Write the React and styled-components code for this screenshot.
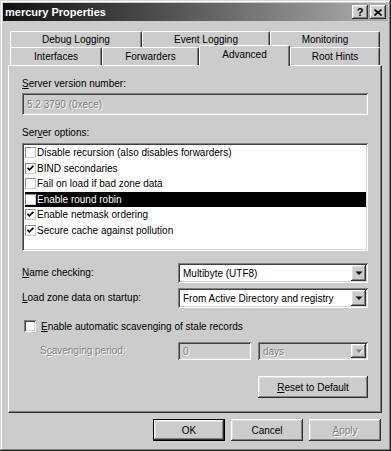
import React from 'react';
import styled, { createGlobalStyle, css } from 'styled-components';

const GlobalStyle = createGlobalStyle`
  html, body {
    margin: 0;
    padding: 0;
    background: #cccccc;
  }
  body {
    font-family: "Liberation Sans", Arial, sans-serif;
    font-size: 10px;
    color: #000;
  }
`;

const raised = css`
  background: #cccccc;
  box-shadow: inset -1px -1px #303030, inset 1px 1px #ffffff,
    inset -2px -2px #808080, inset 2px 2px #dedede;
`;

const sunken = css`
  box-shadow: inset 1px 1px #808080, inset -1px -1px #ffffff,
    inset 2px 2px #404040, inset -2px -2px #d6d6d6;
`;

const disabledText = css`
  color: #808080;
  text-shadow: 1px 1px #ffffff;
`;

const Window = styled.div`
  width: 391px;
  height: 451px;
  box-sizing: border-box;
  padding: 3px;
  display: flex;
  flex-direction: column;
  background: #cccccc;
  box-shadow: inset -1px -1px #202020, inset 1px 1px #d8d8d8,
    inset -2px -2px #808080, inset 2px 2px #ffffff;
`;

const TitleBar = styled.div`
  height: 18px;
  display: flex;
  align-items: center;
  padding: 0 2px 0 2px;
  background: linear-gradient(90deg, #111111 0%, #555555 45%, #b0b0b0 100%);
`;

const Title = styled.div`
  flex: 1;
  color: #fff;
  font-weight: bold;
  font-size: 11px;
`;

const Caps = styled.div`
  display: flex;
  gap: 2px;
`;

const CapButton = styled.div`
  ${raised};
  width: 16px;
  height: 14px;
  display: flex;
  align-items: center;
  justify-content: center;
  font-weight: bold;
  font-size: 11px;
  line-height: 1;
`;

const Body = styled.div`
  flex: 1;
  display: flex;
  flex-direction: column;
  padding: 10px 6px 0 5px;
`;

const TabStrip = styled.div`
  display: flex;
  flex-direction: column;
  padding-left: 2px;
`;

const TabRow = styled.div`
  display: flex;
  align-items: flex-end;
  height: ${(p) => p.$h}px;
`;

const Tab = styled.div`
  width: ${(p) => p.$w}px;
  height: 100%;
  box-sizing: border-box;
  display: flex;
  align-items: center;
  justify-content: center;
  background: #cccccc;
  border-top: 1px solid #ffffff;
  border-left: 1px solid #ffffff;
  border-right: 1px solid #303030;
  border-radius: 2px 2px 0 0;
  box-shadow: inset -1px 0 #808080;
  ${(p) =>
    p.$active &&
    css`
      height: 21px;
      margin-top: -2px;
      margin-bottom: -1px;
      padding-bottom: 3px;
      position: relative;
      z-index: 1;
    `}
`;

const Panel = styled.div`
  height: 348px;
  box-sizing: border-box;
  display: flex;
  flex-direction: column;
  padding: 11px 13px 14px 13px;
  border: 1px solid;
  border-color: #ffffff #303030 #303030 #ffffff;
  box-shadow: inset -1px -1px #808080;
`;

const Label = styled.div`
  height: 14px;
  line-height: 14px;
  margin-top: ${(p) => p.$mt || 0}px;
  padding-left: ${(p) => p.$indent || 0}px;
  ${(p) => p.$disabled && disabledText};
`;

const TextBox = styled.div`
  ${sunken};
  margin-top: ${(p) => p.$mt || 0}px;
  height: ${(p) => p.$h}px;
  box-sizing: border-box;
  display: flex;
  align-items: center;
  padding-left: 5px;
  background: #cccccc;
  ${disabledText};
`;

const ListBox = styled.div`
  ${sunken};
  margin-top: 3px;
  height: 108px;
  box-sizing: border-box;
  padding: 2px 2px 2px 3px;
  background: #ffffff;
  overflow: hidden;
`;

const ListItem = styled.div`
  height: 15.5px;
  display: flex;
  align-items: center;
  gap: 1px;
  background: ${(p) => (p.$selected ? '#000000' : 'transparent')};
  color: ${(p) => (p.$selected ? '#ffffff' : '#000000')};
`;

const SmallCheck = styled.div`
  width: 11px;
  height: 11px;
  box-sizing: border-box;
  background: #ffffff;
  border: 1px solid #909090;
  border-right-color: #c8c8c8;
  border-bottom-color: #c8c8c8;
  display: flex;
  align-items: center;
  justify-content: center;
`;

const FormRow = styled.div`
  display: grid;
  grid-template-columns: ${(p) => p.$cols};
  column-gap: 7px;
  align-items: center;
  height: ${(p) => p.$h}px;
  margin-top: ${(p) => p.$mt}px;
`;

const Combo = styled.div`
  ${sunken};
  height: 100%;
  box-sizing: border-box;
  display: flex;
  align-items: center;
  padding: 2px;
  background: ${(p) => (p.$disabled ? '#cccccc' : '#ffffff')};
`;

const ComboValue = styled.div`
  flex: 1;
  padding-left: 3px;
  white-space: nowrap;
  ${(p) => p.$disabled && disabledText};
`;

const DropButton = styled.div`
  ${raised};
  width: 15px;
  height: 100%;
  display: flex;
  align-items: center;
  justify-content: center;
`;

const CheckRow = styled.div`
  display: flex;
  align-items: center;
  gap: 5px;
  height: 14px;
  margin-top: 11px;
  padding-left: 2px;
`;

const BigCheck = styled.div`
  ${sunken};
  width: 12px;
  height: 12px;
  background: #ffffff;
`;

const ButtonRow = styled.div`
  display: flex;
  justify-content: flex-end;
  gap: 6px;
  margin-top: ${(p) => p.$mt}px;
  padding-right: ${(p) => p.$pr || 0}px;
`;

const Button = styled.div`
  ${raised};
  width: ${(p) => p.$w}px;
  height: 22px;
  box-sizing: border-box;
  display: flex;
  align-items: center;
  justify-content: center;
  ${(p) => p.$disabled && disabledText};
  ${(p) =>
    p.$default &&
    css`
      border: 1px solid #000;
    `}
`;

const U = styled.span`
  text-decoration: underline;
`;

const CheckMark = ({ color = '#000' }) => (
  <svg width="7" height="7" viewBox="0 0 7 7">
    <path d="M0.6 2.8 L2.4 4.8 L6.4 0.8" fill="none" stroke={color} strokeWidth="1.7" />
  </svg>
);

const Arrow = ({ disabled }) => (
  <svg width="8" height="5" viewBox="0 0 8 5">
    {disabled && <path d="M1.5 1 H8.5 L5 4.5 Z" fill="#fff" />}
    <path d="M0.5 0.5 H7.5 L4 4 Z" fill={disabled ? '#808080' : '#000'} />
  </svg>
);

const CloseGlyph = () => (
  <svg width="8" height="7" viewBox="0 0 8 7">
    <path d="M0.5 0.5 L7.5 6.5 M7.5 0.5 L0.5 6.5" stroke="#000" strokeWidth="1.6" />
  </svg>
);

const backTabs = [
  { label: 'Debug Logging', w: 132 },
  { label: 'Event Logging', w: 128 },
  { label: 'Monitoring', w: 110 },
];

const frontTabs = [
  { label: 'Interfaces', w: 92 },
  { label: 'Forwarders', w: 97 },
  { label: 'Advanced', w: 91, active: true },
  { label: 'Root Hints', w: 90 },
];

const options = [
  { label: 'Disable recursion (also disables forwarders)', checked: false },
  { label: 'BIND secondaries', checked: true },
  { label: 'Fail on load if bad zone data', checked: false },
  { label: 'Enable round robin', checked: false, selected: true },
  { label: 'Enable netmask ordering', checked: true },
  { label: 'Secure cache against pollution', checked: true },
];

const Dropdown = ({ value, disabled }) => (
  <Combo $disabled={disabled}>
    <ComboValue $disabled={disabled}>{value}</ComboValue>
    <DropButton>
      <Arrow disabled={disabled} />
    </DropButton>
  </Combo>
);

export default function App() {
  return (
    <>
      <GlobalStyle />
      <Window>
        <TitleBar>
          <Title>mercury Properties</Title>
          <Caps>
            <CapButton>?</CapButton>
            <CapButton>
              <CloseGlyph />
            </CapButton>
          </Caps>
        </TitleBar>
        <Body>
          <TabStrip>
            <TabRow $h={16}>
              {backTabs.map((t) => (
                <Tab key={t.label} $w={t.w}>
                  {t.label}
                </Tab>
              ))}
            </TabRow>
            <TabRow $h={18}>
              {frontTabs.map((t) => (
                <Tab key={t.label} $w={t.w} $active={t.active}>
                  {t.label}
                </Tab>
              ))}
            </TabRow>
          </TabStrip>

          <Panel>
            <Label>
              <U>S</U>erver version number:
            </Label>
            <TextBox $mt={2} $h={22}>
              5.2 3790 (0xece)
            </TextBox>

            <Label $mt={11}>
              Ser<U>v</U>er options:
            </Label>
            <ListBox>
              {options.map((o) => (
                <ListItem key={o.label} $selected={o.selected}>
                  <SmallCheck>{o.checked && <CheckMark />}</SmallCheck>
                  {o.label}
                </ListItem>
              ))}
            </ListBox>

            <FormRow $cols="149px 1fr" $h={20} $mt={12}>
              <Label>
                <U>N</U>ame checking:
              </Label>
              <Dropdown value="Multibyte (UTF8)" />
            </FormRow>
            <FormRow $cols="149px 1fr" $h={20} $mt={5}>
              <Label>
                <U>L</U>oad zone data on startup:
              </Label>
              <Dropdown value="From Active Directory and registry" />
            </FormRow>

            <CheckRow>
              <BigCheck />
              <span>
                <U>E</U>nable automatic scavenging of stale records
              </span>
            </CheckRow>

            <FormRow $cols="149px 73px 1fr" $h={18} $mt={9}>
              <Label $indent={18} $disabled>
                S<U>c</U>avenging period:
              </Label>
              <TextBox $h={18}>0</TextBox>
              <Dropdown value="days" disabled />
            </FormRow>

            <ButtonRow $mt={16}>
              <Button $w={110}>
                <span>
                  <U>R</U>eset to Default
                </span>
              </Button>
            </ButtonRow>
          </Panel>

          <ButtonRow $mt={6} $pr={1}>
            <Button $w={72} $default>
              OK
            </Button>
            <Button $w={72}>Cancel</Button>
            <Button $w={72} $disabled>
              <span>
                <U>A</U>pply
              </span>
            </Button>
          </ButtonRow>
        </Body>
      </Window>
    </>
  );
}
